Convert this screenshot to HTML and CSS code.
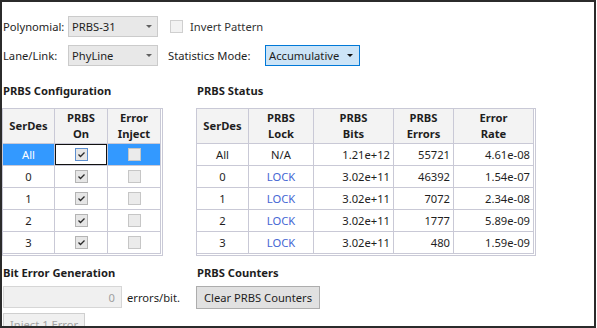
FILE: index.html
```html
<!DOCTYPE html>
<html>
<head>
    <title>PRBS</title>
    <link rel="stylesheet" href="styles.css">
</head>
<body>
    <div class="window">
        <div class="settings">
            <div class="row">
                <label class="field-label">Polynomial:</label>
                <div class="combo"><span>PRBS-31</span><span class="arrow"></span></div>
                <span class="check"></span>
                <span class="check-label">Invert Pattern</span>
            </div>
            <div class="row">
                <label class="field-label">Lane/Link:</label>
                <div class="combo"><span>PhyLine</span><span class="arrow"></span></div>
                <label class="mode-label">Statistics Mode:</label>
                <div class="combo mode"><span>Accumulative</span><span class="arrow"></span></div>
            </div>
        </div>

        <div class="panels">
            <section>
                <h2>PRBS Configuration</h2>
                <div class="grid config">
                    <div class="cell head">SerDes</div>
                    <div class="cell head">PRBS<br>On</div>
                    <div class="cell head">Error<br>Inject</div>

                    <div class="cell sel">All</div>
                    <div class="cell focus"><span class="box on active"><svg width="11" height="11" viewBox="0 0 11 11"><polyline points="2.5,5.5 4.5,7.5 8.5,3.5" /></svg></span></div>
                    <div class="cell sel"><span class="box"></span></div>

                    <div class="cell">0</div>
                    <div class="cell"><span class="box on"><svg width="11" height="11" viewBox="0 0 11 11"><polyline points="2.5,5.5 4.5,7.5 8.5,3.5" /></svg></span></div>
                    <div class="cell"><span class="box"></span></div>

                    <div class="cell">1</div>
                    <div class="cell"><span class="box on"><svg width="11" height="11" viewBox="0 0 11 11"><polyline points="2.5,5.5 4.5,7.5 8.5,3.5" /></svg></span></div>
                    <div class="cell"><span class="box"></span></div>

                    <div class="cell">2</div>
                    <div class="cell"><span class="box on"><svg width="11" height="11" viewBox="0 0 11 11"><polyline points="2.5,5.5 4.5,7.5 8.5,3.5" /></svg></span></div>
                    <div class="cell"><span class="box"></span></div>

                    <div class="cell">3</div>
                    <div class="cell"><span class="box on"><svg width="11" height="11" viewBox="0 0 11 11"><polyline points="2.5,5.5 4.5,7.5 8.5,3.5" /></svg></span></div>
                    <div class="cell"><span class="box"></span></div>
                </div>
            </section>

            <section>
                <h2>PRBS Status</h2>
                <div class="grid status">
                    <div class="cell head">SerDes</div>
                    <div class="cell head">PRBS<br>Lock</div>
                    <div class="cell head">PRBS<br>Bits</div>
                    <div class="cell head">PRBS<br>Errors</div>
                    <div class="cell head">Error<br>Rate</div>

                    <div class="cell">All</div>
                    <div class="cell">N/A</div>
                    <div class="cell num">1.21e+12</div>
                    <div class="cell num">55721</div>
                    <div class="cell num">4.61e-08</div>

                    <div class="cell">0</div>
                    <div class="cell lock">LOCK</div>
                    <div class="cell num">3.02e+11</div>
                    <div class="cell num">46392</div>
                    <div class="cell num">1.54e-07</div>

                    <div class="cell">1</div>
                    <div class="cell lock">LOCK</div>
                    <div class="cell num">3.02e+11</div>
                    <div class="cell num">7072</div>
                    <div class="cell num">2.34e-08</div>

                    <div class="cell">2</div>
                    <div class="cell lock">LOCK</div>
                    <div class="cell num">3.02e+11</div>
                    <div class="cell num">1777</div>
                    <div class="cell num">5.89e-09</div>

                    <div class="cell">3</div>
                    <div class="cell lock">LOCK</div>
                    <div class="cell num">3.02e+11</div>
                    <div class="cell num">480</div>
                    <div class="cell num">1.59e-09</div>
                </div>
            </section>
        </div>

        <div class="panels lower">
            <section>
                <h2>Bit Error Generation</h2>
                <div class="rate-row">
                    <input type="text" value="0" disabled>
                    <span>errors/bit.</span>
                </div>
                <button class="inject" disabled>Inject 1 Error</button>
            </section>
            <section>
                <h2>PRBS Counters</h2>
                <button class="clear">Clear PRBS Counters</button>
            </section>
        </div>
    </div>
</body>
</html>
```

FILE: styles.css
```css
* {
    margin: 0;
    padding: 0;
    box-sizing: border-box;
}

body {
    background: #fff;
    font-family: 'Noto Sans', sans-serif;
    font-size: 11.2px;
    color: #1e1e1e;
}

.window {
    width: 596px;
    height: 328px;
    border: 2px solid #2b2b2b;
    overflow: hidden;
}

/* top settings */
.settings {
    padding: 14px 0 0 1px;
}

.row {
    display: flex;
    align-items: center;
    height: 21px;
}

.row + .row {
    margin-top: 8px;
}

.field-label {
    width: 65px;
}

.combo {
    width: 90px;
    height: 21px;
    border: 1px solid #cbcbcb;
    background: #e8e8e8;
    display: flex;
    align-items: center;
    justify-content: space-between;
    padding: 0 5px 0 3px;
}

.combo.mode {
    width: 95px;
    background: #cce4f7;
    border-color: #0078d7;
    padding-right: 6px;
}

.arrow {
    width: 0;
    height: 0;
    border-left: 3px solid transparent;
    border-right: 3px solid transparent;
    border-top: 3px solid #606060;
}

.combo.mode .arrow {
    border-top-color: #111;
}

.check {
    width: 13px;
    height: 13px;
    border: 1px solid #cfcfcf;
    background: #f2f2f2;
    margin-left: 12px;
    margin-right: 7px;
}

.check-label {
    color: #333;
}

.mode-label {
    width: 97px;
    margin-left: 10px;
}

/* panels */
.panels {
    display: grid;
    grid-template-columns: 194px 1fr;
    margin-top: 17px;
}

.panels.lower {
    margin-top: 9px;
}

h2 {
    font-size: 11.2px;
    font-weight: bold;
    line-height: 16px;
    padding-left: 1px;
    margin-bottom: 9px;
}

.lower h2 {
    margin-bottom: 5px;
}

.grid {
    display: grid;
    width: max-content;
    border: 1px solid #c9c9d6;
    padding: 0 1px 1px 0;
}

.grid.config {
    grid-template-columns: 52px 53px 53px;
}

.grid.status {
    grid-template-columns: 52px 65px 80px 60px 80px;
}

.cell {
    height: 22px;
    border-right: 1px solid #c9c9d6;
    border-bottom: 1px solid #c9c9d6;
    display: flex;
    align-items: center;
    justify-content: center;
}

.cell.head {
    height: 35px;
    background: #f3f3f3;
    font-weight: bold;
    text-align: center;
    line-height: 16px;
}

.cell.num {
    justify-content: flex-end;
    padding-right: 3px;
}

.cell.lock {
    color: #4466d4;
}

.cell.sel {
    background: #3399ff;
    color: #fff;
}

.cell.focus {
    background: #fff;
    box-shadow: inset 0 0 0 1px #111;
}

.box {
    width: 13px;
    height: 13px;
    border: 1px solid #c6c6c6;
    background: #ebebeb;
    display: flex;
}

.box.on {
    border-color: #b4b4b4;
    background: #e6e6e6;
}

.box.active {
    border-color: #5d8fd0;
}

.box svg polyline {
    fill: none;
    stroke: #2a2a2a;
    stroke-width: 1.3;
}

/* bottom controls */
.rate-row {
    display: flex;
    align-items: center;
    gap: 5px;
    padding-left: 1px;
}

.rate-row input {
    width: 119px;
    height: 22px;
    border: 1px solid #d6d6d6;
    background: #f0f0f0;
    color: #a0a0a0;
    text-align: right;
    padding-right: 6px;
    font: inherit;
}

button {
    font: inherit;
    height: 23px;
    cursor: pointer;
}

.inject {
    width: 82px;
    margin: 5px 0 0 1px;
    border: 1px solid #cfcfcf;
    background: #f0f0f0;
    color: #a3a3a3;
}

.clear {
    width: 124px;
    border: 1px solid #adadad;
    background: #e1e1e1;
    color: #1e1e1e;
}
```
